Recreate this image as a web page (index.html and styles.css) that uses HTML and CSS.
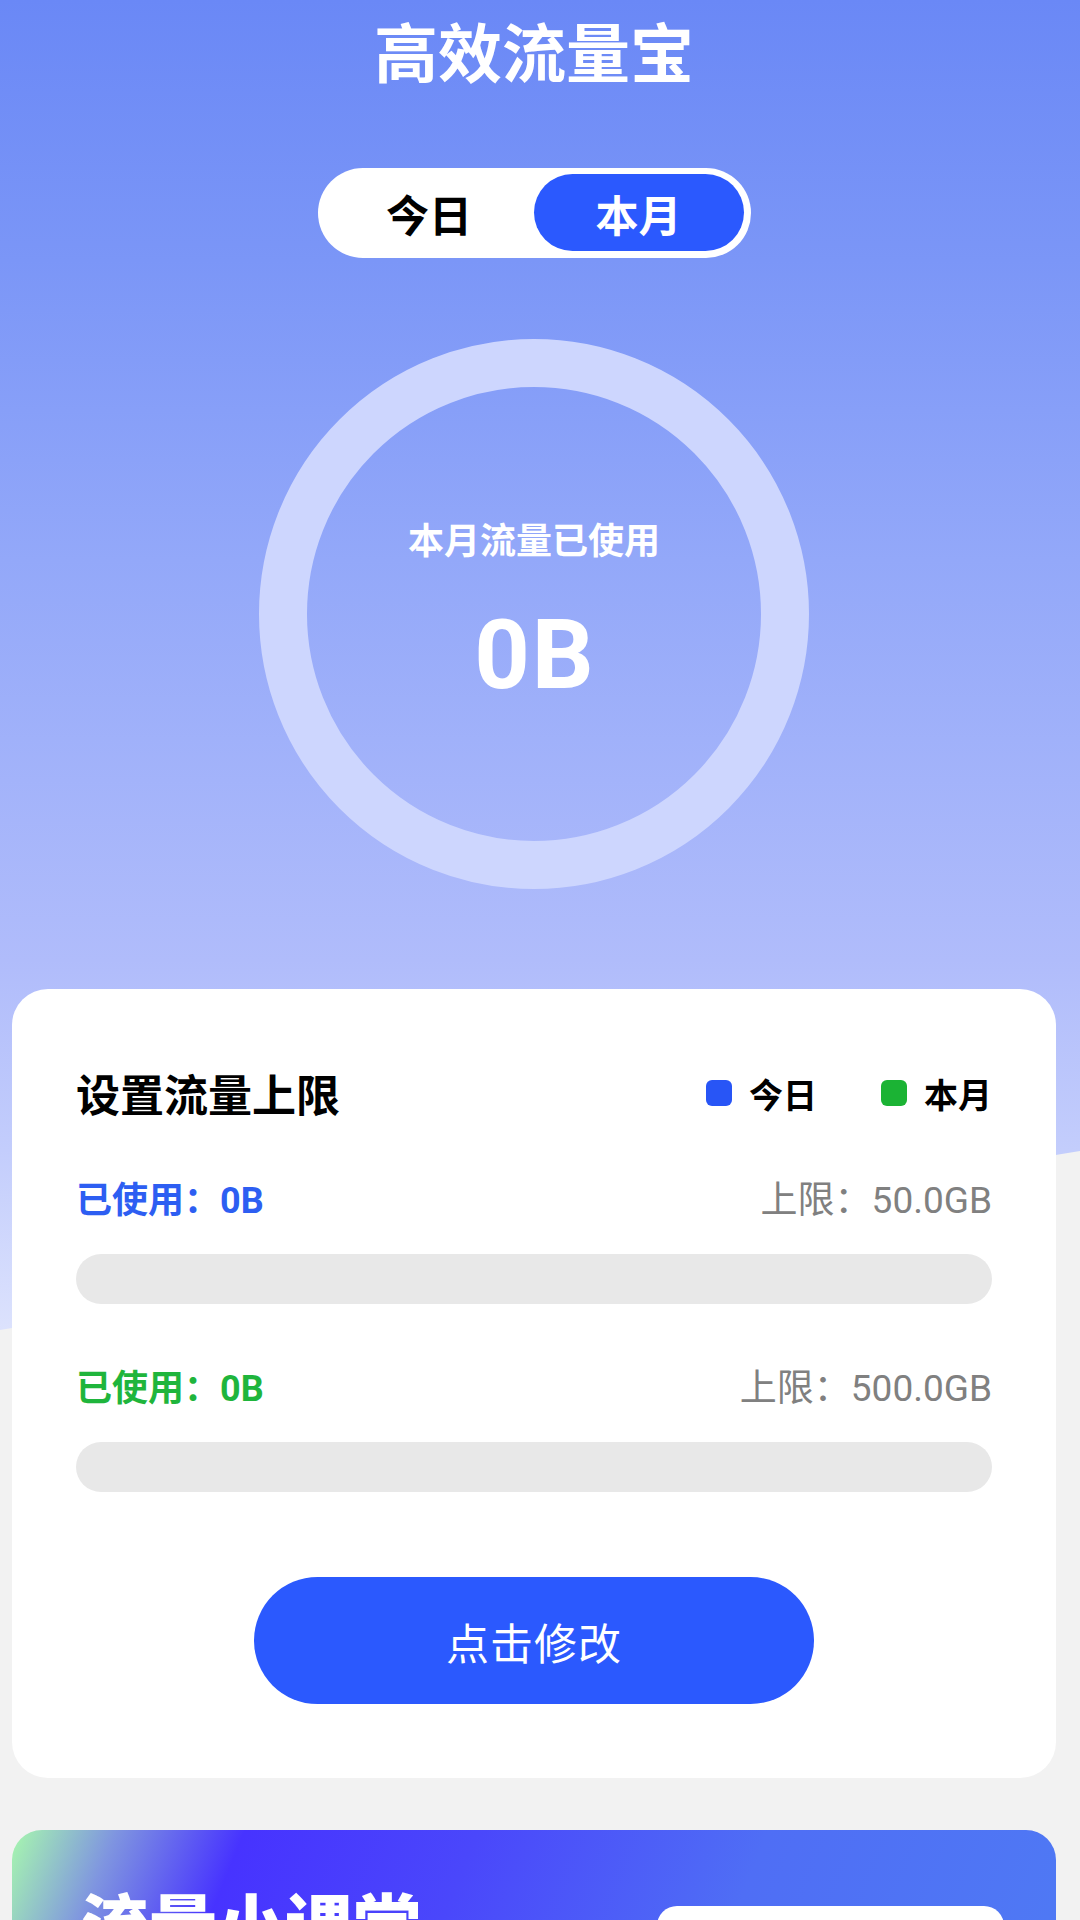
FILE: index.html
```html
<!DOCTYPE html>
<html lang="zh-CN">
<head>
<meta charset="utf-8">
<title>高效流量宝</title>
<link rel="stylesheet" href="styles.css">
</head>
<body>
<div class="hero-bg"></div>
<div class="page">
  <h1 class="title">高效流量宝</h1>
  <div class="toggle">
    <div class="toggle-item">今日</div>
    <div class="toggle-item active">本月</div>
  </div>
  <div class="ring">
    <div class="ring-label">本月流量已使用</div>
    <div class="ring-value">0B</div>
  </div>
  <div class="card">
    <div class="card-head">
      <div class="card-title">设置流量上限</div>
      <div class="legend">
        <span class="legend-item"><i class="dot dot-blue"></i>今日</span>
        <span class="legend-item"><i class="dot dot-green"></i>本月</span>
      </div>
    </div>
    <div class="usage-row">
      <span class="used used-blue">已使用：0B</span>
      <span class="limit">上限：50.0GB</span>
    </div>
    <div class="bar"></div>
    <div class="usage-row row-second">
      <span class="used used-green">已使用：0B</span>
      <span class="limit">上限：500.0GB</span>
    </div>
    <div class="bar"></div>
    <div class="btn-wrap">
      <div class="btn">点击修改</div>
    </div>
  </div>
  <div class="banner">
    <div class="banner-title">流量小课堂</div>
    <div class="banner-box"></div>
  </div>
</div>
</body>
</html>
```

FILE: styles.css
```css
html, body {
  margin: 0;
  padding: 0;
}
body {
  position: relative;
  width: 1080px;
  height: 1920px;
  overflow: hidden;
  background: #f2f2f2;
  font-family: Roboto, "Noto Sans CJK SC", sans-serif;
}
.hero-bg {
  position: absolute;
  left: 0;
  top: 0;
  width: 1080px;
  height: 1330px;
  background: linear-gradient(180deg, #6a88f6 0px, #7b96f7 260px, #93a8f9 560px, #b0bcfb 960px, #c3cdfc 1150px, #dce2fd 1330px);
  clip-path: polygon(0 0, 100% 0, 100% 1151px, 0 1330px);
}
.page {
  position: relative;
  width: 1068px;
  display: flex;
  flex-direction: column;
  align-items: center;
}
.title {
  margin: 9px 0 0;
  font-family: "Noto Sans CJK SC", sans-serif;
  font-size: 64px;
  line-height: 80px;
  font-weight: 700;
  color: #ffffff;
}
.toggle {
  margin-top: 79px;
  width: 433px;
  height: 90px;
  box-sizing: border-box;
  padding: 6px 7px 7px;
  background: #ffffff;
  border-radius: 45px;
  display: flex;
}
.toggle-item {
  flex: 1;
  display: flex;
  align-items: center;
  justify-content: center;
  font-family: "Noto Sans CJK SC", sans-serif;
  font-size: 43px;
  font-weight: 700;
  color: #000000;
  border-radius: 39px;
}
.toggle-item.active {
  flex: 0 0 210px;
  background: #2b59fe;
  color: #ffffff;
}
.ring {
  margin-top: 81px;
  width: 550px;
  height: 550px;
  box-sizing: border-box;
  border: 48px solid #cdd6fe;
  border-radius: 50%;
  display: flex;
  flex-direction: column;
  align-items: center;
  justify-content: center;
  padding-bottom: 8px;
}
.ring-label {
  font-family: "Noto Sans CJK SC", sans-serif;
  font-size: 36px;
  line-height: 46px;
  font-weight: 700;
  color: #ffffff;
}
.ring-value {
  margin-top: 44px;
  font-family: Roboto, sans-serif;
  font-size: 97px;
  line-height: 100px;
  font-weight: 700;
  color: #ffffff;
  letter-spacing: 2px;
  padding-left: 2px;
}
.card {
  margin-top: 100px;
  width: 1044px;
  box-sizing: border-box;
  padding: 79px 64px 74px;
  background: #ffffff;
  border-radius: 36px;
  display: flex;
  flex-direction: column;
}
.card-head {
  display: flex;
  justify-content: space-between;
  align-items: center;
  height: 50px;
}
.card-title {
  font-family: "Noto Sans CJK SC", sans-serif;
  font-size: 44px;
  font-weight: 700;
  color: #000000;
}
.legend {
  display: flex;
  align-items: center;
  gap: 64px;
}
.legend-item {
  display: flex;
  align-items: center;
  gap: 17px;
  font-family: "Noto Sans CJK SC", sans-serif;
  font-size: 34px;
  font-weight: 700;
  color: #000000;
}
.dot {
  display: block;
  width: 26px;
  height: 26px;
  border-radius: 6px;
}
.dot-blue { background: #2855f6; }
.dot-green { background: #1bb334; }
.usage-row {
  margin-top: 58px;
  height: 42px;
  display: flex;
  justify-content: space-between;
  align-items: center;
}
.row-second {
  margin-top: 60px;
}
.used {
  font-size: 36px;
  font-weight: 700;
}
.used-blue { color: #2d5ef2; }
.used-green { color: #1fb53c; }
.limit {
  font-size: 37px;
  font-weight: 400;
  color: #808080;
}
.bar {
  margin-top: 36px;
  height: 50px;
  border-radius: 25px;
  background: #e8e8e8;
}
.btn-wrap {
  margin-top: 85px;
  display: flex;
  justify-content: center;
}
.btn {
  width: 560px;
  height: 127px;
  border-radius: 64px;
  background: #2b59fe;
  color: #ffffff;
  display: flex;
  align-items: center;
  justify-content: center;
  font-family: "Noto Sans CJK SC", sans-serif;
  font-size: 43px;
  font-weight: 400;
  letter-spacing: 1px;
}
.banner {
  margin-top: 52px;
  width: 1044px;
  height: 300px;
  box-sizing: border-box;
  padding: 52px 52px 0 69px;
  border-radius: 30px;
  background: linear-gradient(112deg, #a7f8ae 0%, #7f95e0 9%, #4733ff 20%, #4a47fb 40%, #4f6ef5 65%, #4f7bf4 100%);
  display: flex;
  justify-content: space-between;
  align-items: flex-start;
}
.banner-title {
  font-family: "Noto Sans CJK SC", sans-serif;
  font-size: 68px;
  line-height: 80px;
  font-weight: 900;
  color: #ffffff;
}
.banner-box {
  margin-top: 24px;
  width: 347px;
  height: 120px;
  border-radius: 20px;
  background: #ffffff;
}
```
